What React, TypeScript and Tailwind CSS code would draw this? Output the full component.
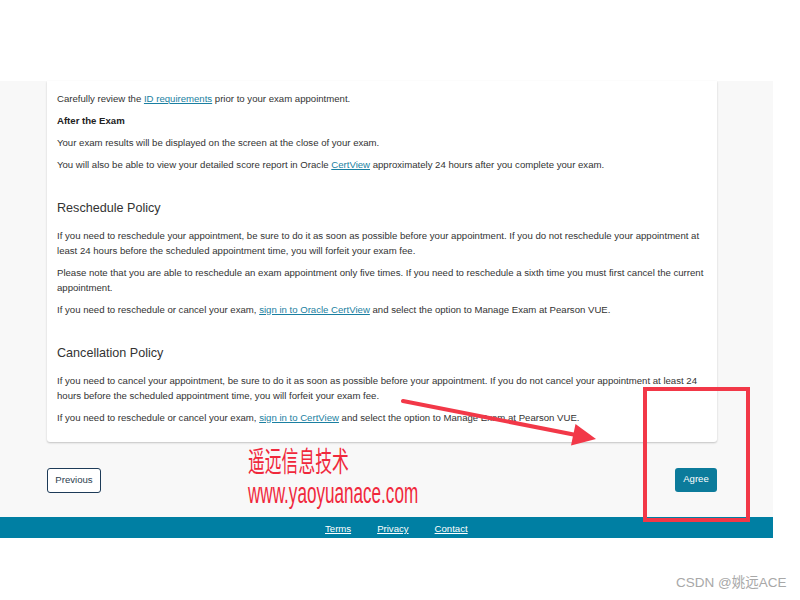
const A = ({ children }: { children: React.ReactNode }) => (
  <a href="#" className="text-[#1a7fa1] underline">
    {children}
  </a>
);

const P = ({ children, bold }: { children: React.ReactNode; bold?: boolean }) => (
  <p className={`mb-[7px] ${bold ? "font-bold text-[#222]" : ""}`}>{children}</p>
);

// margins collapse with the paragraph's mb-[7px]
const H = ({ children }: { children: React.ReactNode }) => (
  <h2 className="mt-[27.5px] mb-[10.5px] text-[12.6px] leading-[18px] font-normal text-[#333]">
    {children}
  </h2>
);

const Annotations = () => (
  <>
    <svg
      className="pointer-events-none absolute left-0 top-0"
      width="800"
      height="600"
      viewBox="0 0 800 600"
    >
      <rect x="645" y="389" width="103" height="131" fill="none" stroke="#f23848" strokeWidth="4" />
      <line x1="403" y1="401" x2="576" y2="435" stroke="#f23848" strokeWidth="4" strokeLinecap="round" />
      <polygon points="596,439 571,445.5 575.5,424" fill="#f23848" />
    </svg>
    <div className="pointer-events-none absolute left-[248px] top-[445px] origin-left scale-x-[0.6] whitespace-nowrap text-[28px] leading-[30px] text-[#f0283c] font-['Noto_Sans_CJK_SC',sans-serif]">
      遥远信息技术
    </div>
    <div className="pointer-events-none absolute left-[248px] top-[479px] origin-left scale-x-[0.57] whitespace-nowrap text-[30px] leading-[28px] text-[#f0283c] font-['Liberation_Sans',Arial,sans-serif]">
      www.yaoyuanace.com
    </div>
    <div className="pointer-events-none absolute left-[676px] top-[575px] whitespace-nowrap text-[13.5px] leading-[16px] text-[#a8a8a8] font-['Liberation_Sans','Noto_Sans_CJK_SC',sans-serif]">
      CSDN @姚远ACE
    </div>
  </>
);

export default function App() {
  return (
    <div className="relative h-[600px] w-[800px] overflow-hidden bg-white font-['Liberation_Sans',Arial,sans-serif]">
      <div className="pt-[81px]">
        <div className="w-[773px] bg-[#f8f8f8]">
          <div className="pl-[47px]">
            <div className="w-[670px] rounded-b-[3px] bg-white px-[10px] pt-[9.5px] pb-[10px] text-[9.6px] leading-[15px] text-[#333] shadow-[0_1px_2px_rgba(0,0,0,0.22)]">
              <P>
                Carefully review the <A>ID requirements</A> prior to your exam appointment.
              </P>
              <P bold>After the Exam</P>
              <P>Your exam results will be displayed on the screen at the close of your exam.</P>
              <P>
                You will also be able to view your detailed score report in Oracle <A>CertView</A>{" "}
                approximately 24 hours after you complete your exam.
              </P>

              <H>Reschedule Policy</H>
              <P>
                If you need to reschedule your appointment, be sure to do it as soon as possible before
                your appointment. If you do not reschedule your appointment at
                <br />
                least 24 hours before the scheduled appointment time, you will forfeit your exam fee.
              </P>
              <P>
                Please note that you are able to reschedule an exam appointment only five times. If you
                need to reschedule a sixth time you must first cancel the current
                <br />
                appointment.
              </P>
              <P>
                If you need to reschedule or cancel your exam, <A>sign in to Oracle CertView</A> and
                select the option to Manage Exam at Pearson VUE.
              </P>

              <H>Cancellation Policy</H>
              <P>
                If you need to cancel your appointment, be sure to do it as soon as possible before your
                appointment. If you do not cancel your appointment at least 24
                <br />
                hours before the scheduled appointment time, you will forfeit your exam fee.
              </P>
              <P>
                If you need to reschedule or cancel your exam, <A>sign in to CertView</A> and select the
                option to Manage Exam at Pearson VUE.
              </P>
            </div>
          </div>

          <div className="mt-[26px] flex items-start justify-between pl-[47px] pr-[56px] text-[9.6px]">
            <button className="h-[25px] w-[54px] rounded-[3px] border-[1.5px] border-[#1d3b58] bg-white text-[#2d3e50]">
              Previous
            </button>
            <button className="h-[24px] w-[42px] rounded-[3px] bg-[#0c7b9b] text-white">Agree</button>
          </div>

          <div className="mt-[24px] h-[21px] bg-[#007fa3]">
            <div className="flex gap-[26px] pl-[325px] pt-[4.5px] text-[9.6px] leading-[15px] text-white">
              <a href="#" className="underline">Terms</a>
              <a href="#" className="underline">Privacy</a>
              <a href="#" className="underline">Contact</a>
            </div>
          </div>
        </div>
      </div>
      <Annotations />
    </div>
  );
}
